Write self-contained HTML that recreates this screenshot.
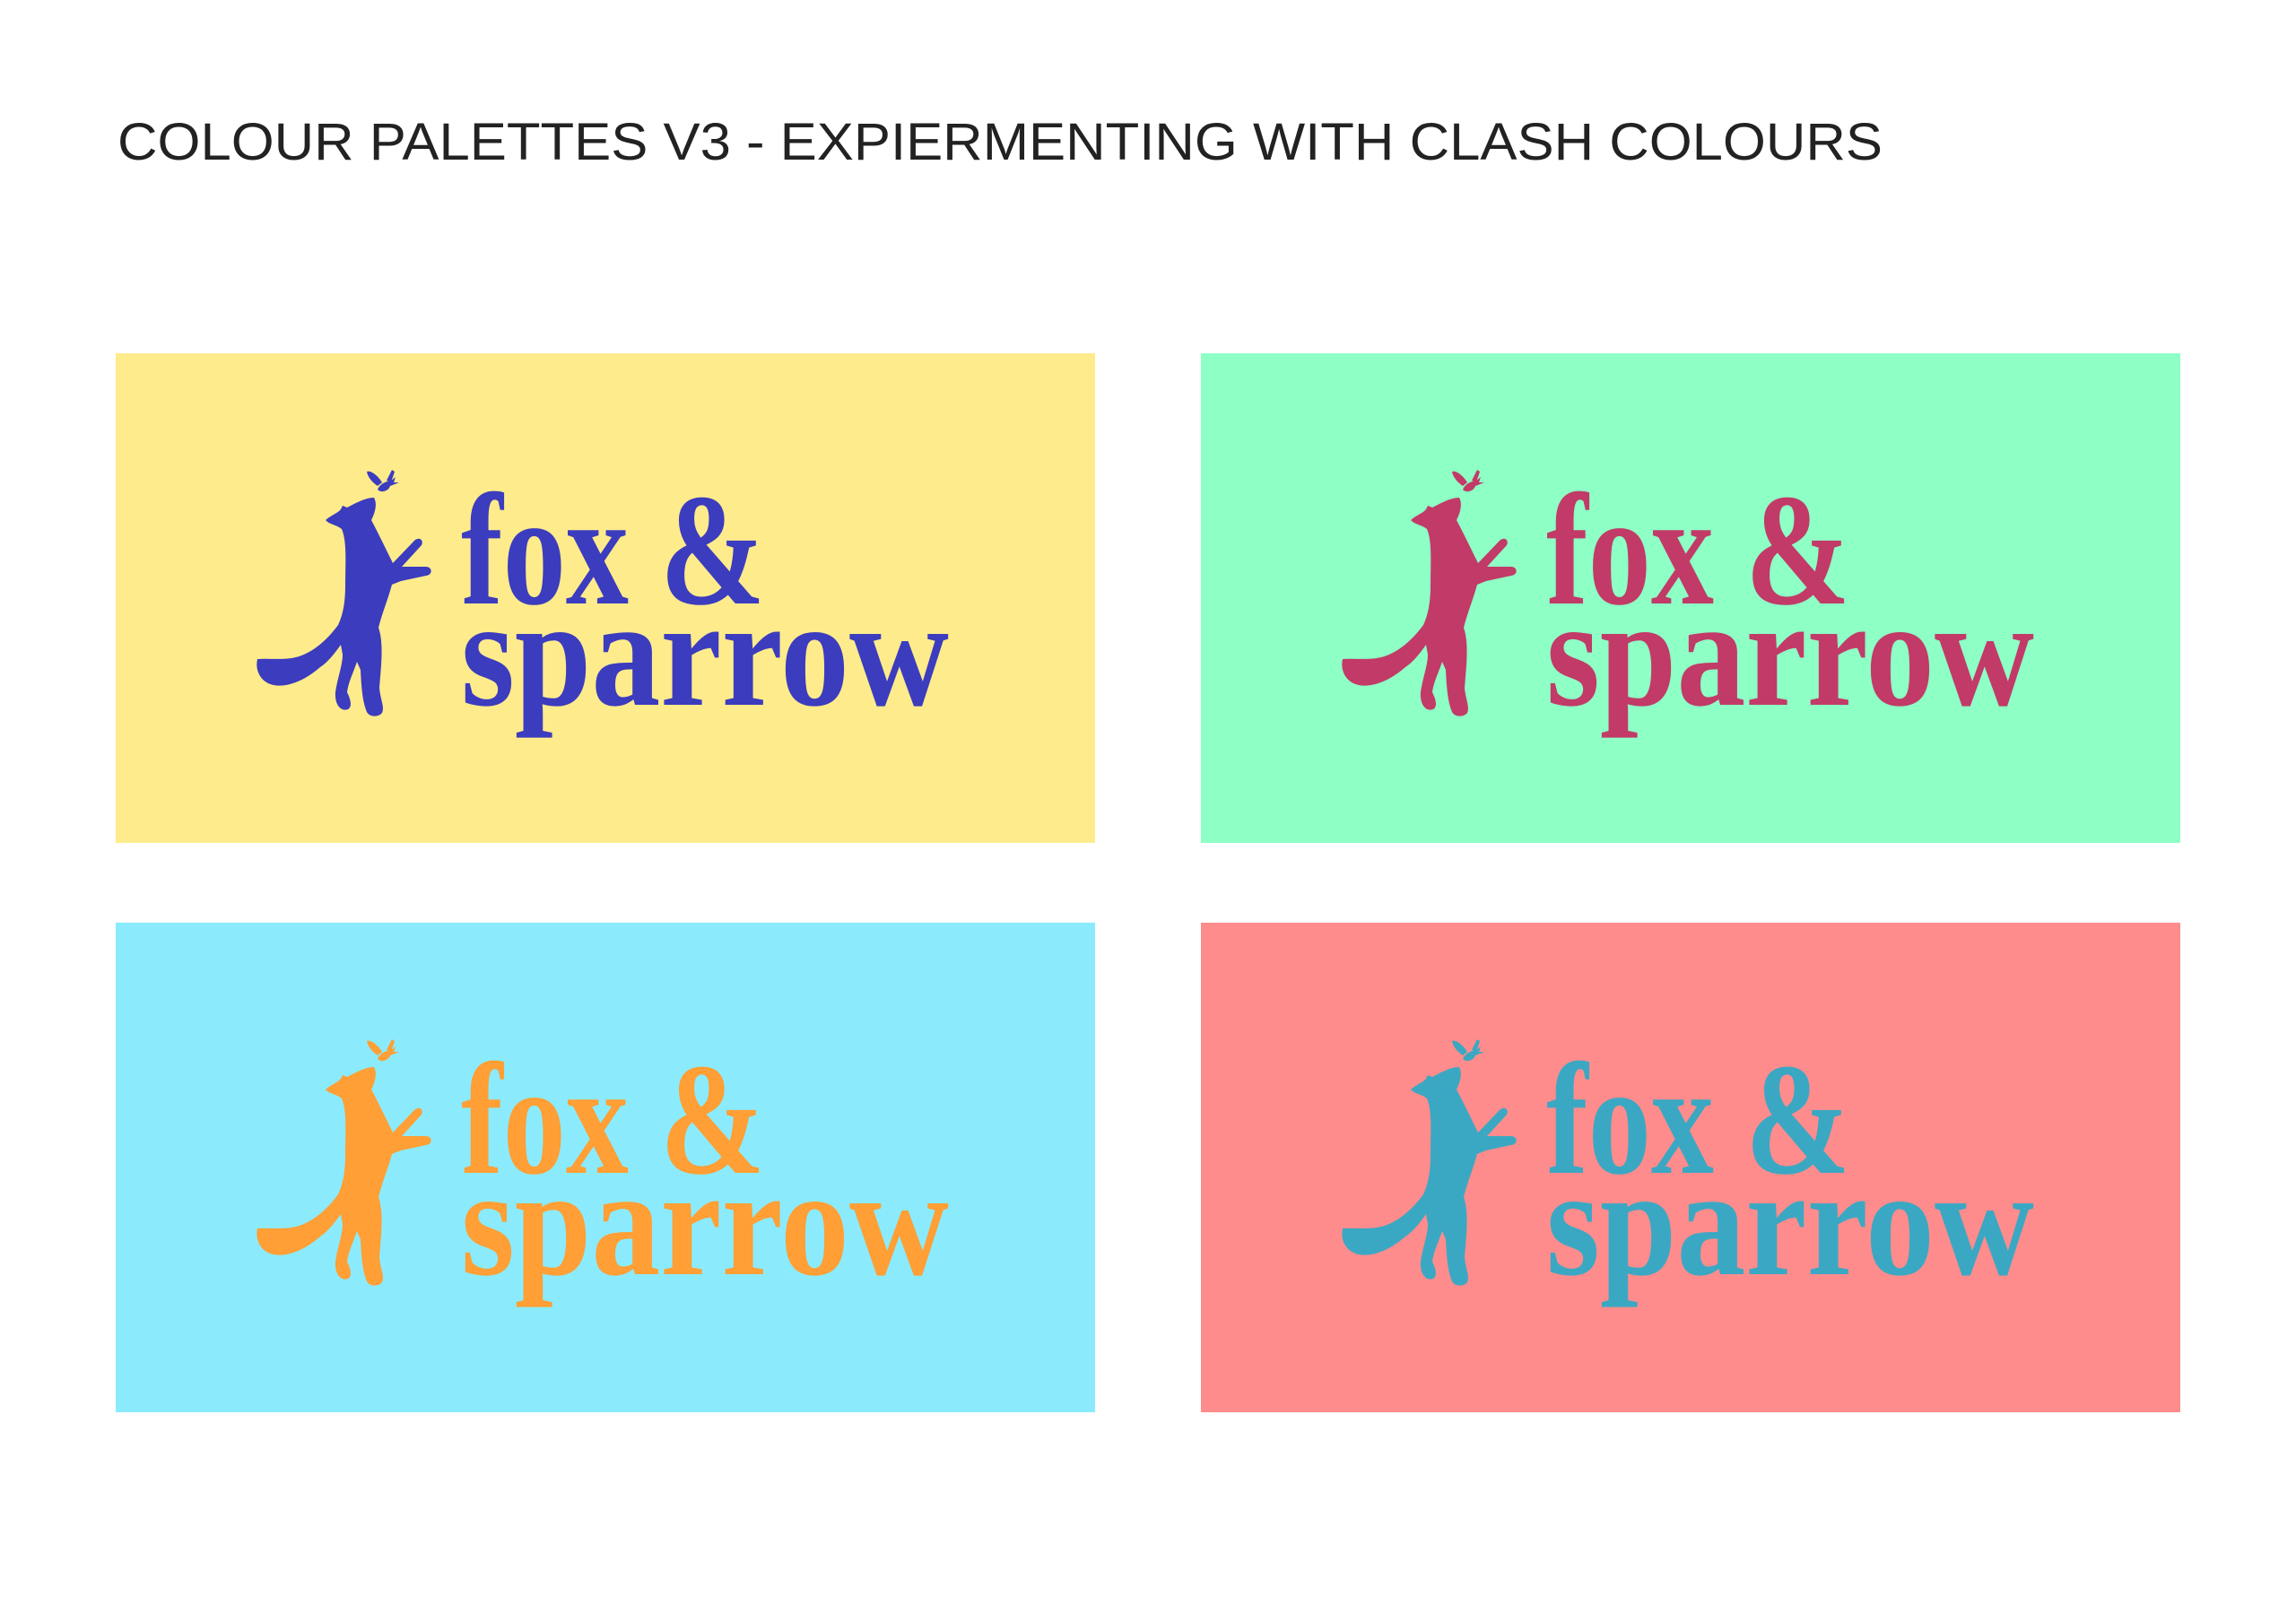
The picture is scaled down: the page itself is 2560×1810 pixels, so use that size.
<!DOCTYPE html>
<html><head><meta charset="utf-8"><style>
html,body{margin:0;padding:0;background:#fff}
body{width:2560px;height:1810px;overflow:hidden;position:relative}
svg{position:absolute;left:0;top:0}
</style></head><body>
<svg width="2560" height="1810" viewBox="0 0 2560 1810" xmlns="http://www.w3.org/2000/svg">
<defs>
<g id="logo">
  <g transform="translate(156,128)">
    <path d="M78,58 C85,52 92,50 95,46 L97,42 L102,44 C110,40 122,33 132,33 C136,40 133,50 129,58 C138,75 146,92 153,106 L176,82 C181,76 188,79 185,86 L163,110 L190,110 C197,110 198,119 190,120 L162,126 L152,130 C147,148 141,162 137,178 C143,195 140,220 138,245 C139,258 144,266 141,273 C137,278 127,278 124,272 C119,260 118,245 117,225 L113,216 C109,228 103,240 102,250 C106,258 108,266 103,269 C95,272 88,264 89,250 C91,235 97,220 97,208 L95,197 C88,207 80,217 72,222 C55,237 35,245 20,242 C6,239 -1,226 2,213 C12,212 25,214 40,212 C60,209 78,194 92,175 C98,162 100,148 100,130 C100,105 102,82 96,68 C90,63 82,63 78,58 Z"/>
    <path d="M136,24 C138,18 146,14 150,15 L156,10 L154,16 L160,16 L150,20 C148,26 140,28 136,24 Z"/>
    <path d="M124,4 C128,2 136,8 141,16 L136,20 C130,16 125,10 124,4 Z"/>
    <path d="M146,14 L152,2 L155,4 L151,16 Z"/>
  </g>
  <text x="385" y="279" font-family="Liberation Serif, serif" font-weight="bold" font-size="178" textLength="339" lengthAdjust="spacingAndGlyphs">fox &amp;</text>
  <text x="385" y="392" font-family="Liberation Serif, serif" font-weight="bold" font-size="172" textLength="544" lengthAdjust="spacingAndGlyphs">sparrow</text>
</g>
</defs>
<text x="131" y="178" font-family="Liberation Sans, sans-serif" font-size="58" fill="#222" textLength="1968" lengthAdjust="spacingAndGlyphs">COLOUR PALETTES V3 - EXPIERMENTING WITH CLASH COLOURS</text>

<rect x="129" y="394" width="1092" height="546" fill="#FEEB8C"/>
<g transform="translate(129,394)" fill="#3C3CBE"><use href="#logo"/></g>

<rect x="1339" y="394" width="1092" height="546" fill="#8EFFC5"/>
<g transform="translate(1339,394)" fill="#C23A68"><use href="#logo"/></g>

<rect x="129" y="1029" width="1092" height="546" fill="#8BEBFD"/>
<g transform="translate(129,1029)" fill="#FF9F35"><use href="#logo"/></g>

<rect x="1339" y="1029" width="1092" height="546" fill="#FF8C8C"/>
<g transform="translate(1339,1029)" fill="#3BA8C3"><use href="#logo"/></g>
</svg>
</body></html>
